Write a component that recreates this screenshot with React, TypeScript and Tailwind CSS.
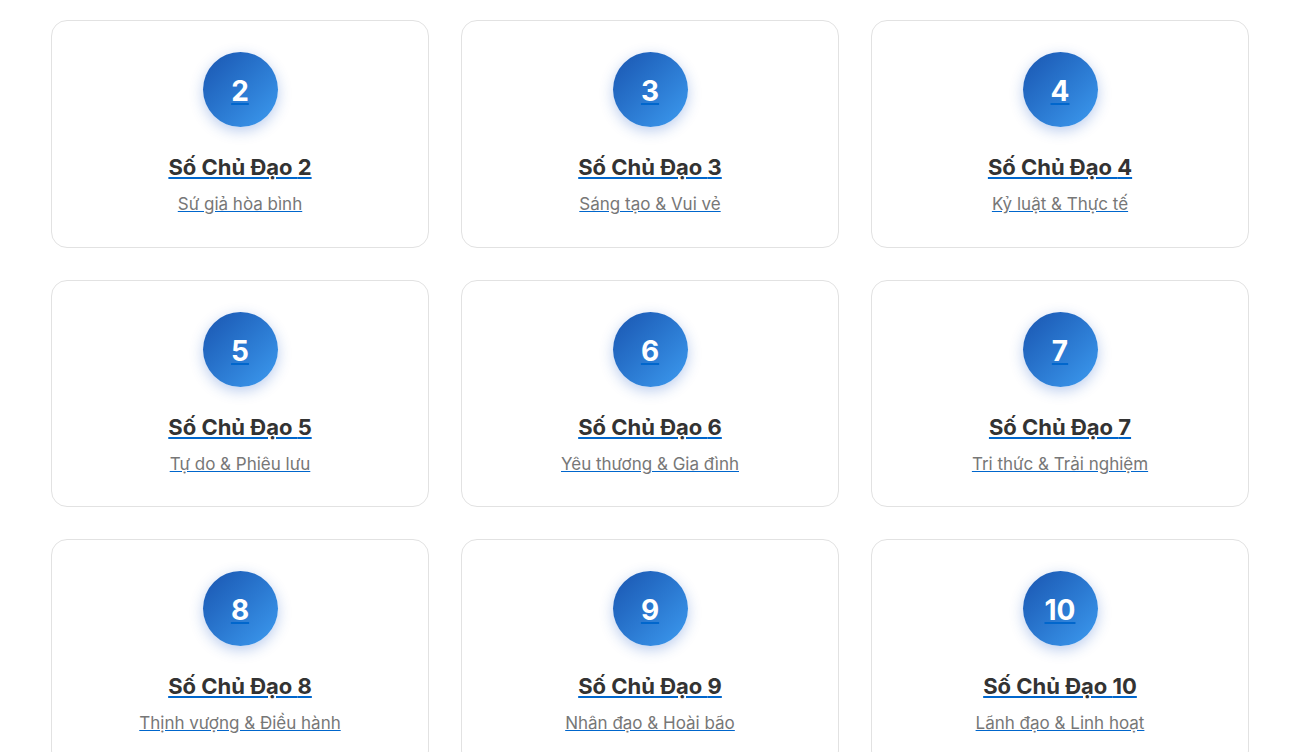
const paths = [
  { num: 2, desc: "Sứ giả hòa bình" },
  { num: 3, desc: "Sáng tạo & Vui vẻ" },
  { num: 4, desc: "Kỷ luật & Thực tế" },
  { num: 5, desc: "Tự do & Phiêu lưu" },
  { num: 6, desc: "Yêu thương & Gia đình" },
  { num: 7, desc: "Tri thức & Trải nghiệm" },
  { num: 8, desc: "Thịnh vượng & Điều hành" },
  { num: 9, desc: "Nhân đạo & Hoài bão" },
  { num: 10, desc: "Lãnh đạo & Linh hoạt" },
];

export default function App() {
  return (
    <div className="min-h-screen bg-white font-['Inter','Noto_Sans',sans-serif]">
      <div className="pl-[51px] pr-[49px] pt-5 grid grid-cols-3 gap-8">
        {paths.map((p) => (
          <a
            key={p.num}
            href="#"
            className="flex flex-col items-center rounded-2xl border border-[#e2e2e2] bg-white pt-[31px] pb-[30.5px] text-[#0066cc] underline"
          >
            <div className="flex h-[75px] w-[75px] items-center justify-center rounded-full bg-gradient-to-br from-[#1a55b0] to-[#3d9bf0] pt-[3px] shadow-[0_4px_14px_rgba(30,90,200,0.3)]">
              <span className="text-[28px] font-bold leading-none text-white">{p.num}</span>
            </div>
            <h3 className="mt-[25px] text-[22px] font-bold leading-[30px] text-[#333333]">
              Số Chủ Đạo {p.num}
            </h3>
            <p className="mt-[10px] text-[17px] leading-6 text-[#777777]">{p.desc}</p>
          </a>
        ))}
      </div>
    </div>
  );
}
